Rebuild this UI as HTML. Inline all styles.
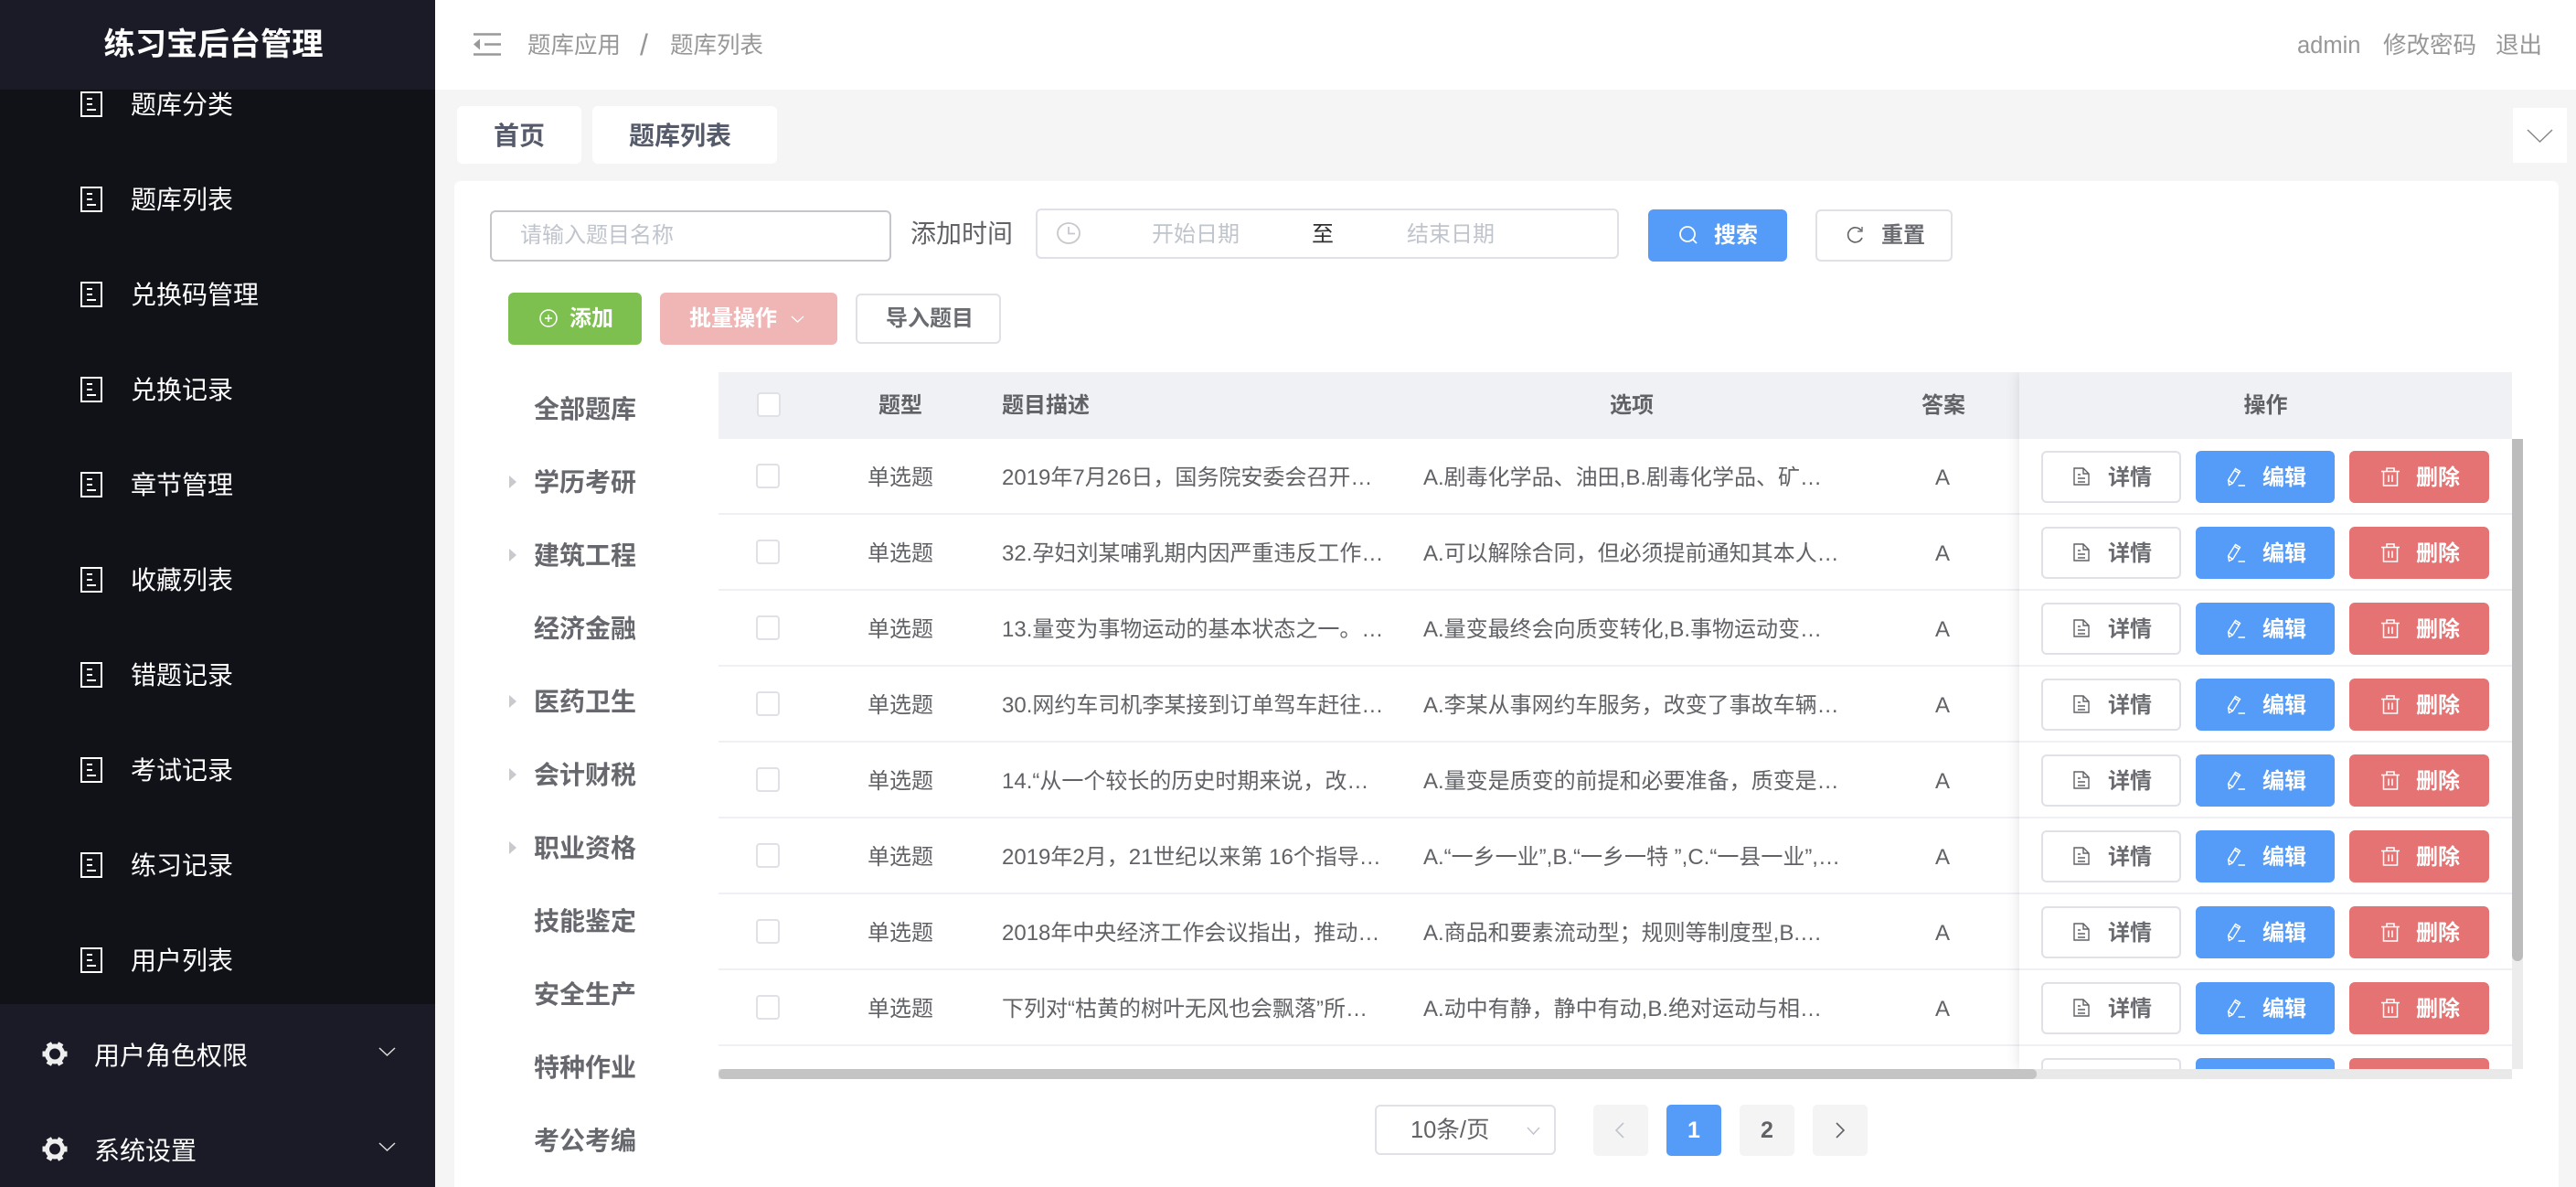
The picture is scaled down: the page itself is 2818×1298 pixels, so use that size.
<!DOCTYPE html>
<html lang="zh-CN">
<head>
<meta charset="utf-8">
<title>练习宝后台管理</title>
<style>
*{box-sizing:border-box;margin:0;padding:0}
html,body{width:2818px;height:1298px;overflow:hidden;background:#f5f5f6}
body{position:relative;font-family:"Liberation Sans","Noto Sans CJK SC",sans-serif;color:#606266}
.a{position:absolute}
.t{position:absolute;white-space:nowrap;line-height:40px;height:40px;margin-top:2px}
svg{position:absolute;display:block;overflow:visible;fill:none}
#side{left:0;top:0;width:476px;height:1298px;background:#111218;overflow:hidden}
#side .t.m{left:143px;font-size:28px;color:#fff;margin-top:1px}
#side .ic{left:88px;width:24px;height:28px;border:2px solid #fff}
#side .ic:before,#side .ic:after{content:"";position:absolute;left:5px;width:10px;height:0;border-top:2px solid #fff}
#side .ic:before{top:5px;width:6px;box-shadow:0 6px 0 #fff}
#side .ic:after{top:17px}
#logo{left:0;top:0;width:467px;height:98px;color:#fff;font-size:34.300px;font-weight:700;text-align:center;line-height:99px}
#logoBg{left:0;top:0;width:476px;height:98px;background:#1a1b26}
#bot{left:0;top:1098px;width:476px;height:200px;background:#1a1b26}
#bot .t{left:103px;font-size:28px;color:#fff}
#head{left:476px;top:0;width:2342px;height:98px;background:#fff}
.bc{font-size:25.500px;color:#979797}
.tab{background:#fff;border-radius:6px;font-size:28px;font-weight:700;color:#565b6b;text-align:center;line-height:65px}
#card{left:497px;top:198px;width:2302px;height:1110px;background:#fff;border-radius:7px}
.btn{position:absolute;border-radius:6px;font-size:24px;font-weight:700;color:#fff}
.pl{box-shadow:inset 0 0 0 2px #dfe1e6;background:#fff;color:#6a6c71;font-weight:700}
.btn .t{top:8.500px;margin-top:0}
.row .btn .t,.fr .btn .t{margin-top:1px}
.tree{left:584px;font-size:28px;font-weight:700;color:#66686d;margin-top:1px}
.tri{left:557px;width:0;height:0;border-left:8px solid #c8cacf;border-top:7px solid transparent;border-bottom:7px solid transparent}
#tbl{left:786px;top:407px;width:1962px;height:762px;overflow:hidden;background:#fff}
#thead{left:0;top:0;width:1962px;height:73px;background:#eff1f4}
#thead .t{font-size:24px;font-weight:700;color:#606266;top:15px}
.row{position:absolute;left:0;width:1962px;height:83px;border-bottom:2px solid #eef0f3;font-size:24px;color:#606266}
.row .t{top:21px}
.cb{position:absolute;width:26px;height:27px;background:#fff;border:2px solid #dfe1e6;border-radius:4px}
.c{text-align:center}
#fix{left:1423px;top:0;width:539px;height:762px;background:#fff;box-shadow:0 0 14px rgba(0,0,0,.12)}
.fr{position:absolute;left:0;width:539px;height:83px;border-bottom:2px solid #eef0f3}
.d{left:24px;top:13px;width:153px;height:57px}
.e{left:193px;top:13px;width:152px;height:57px;background:#549cf8}
.x{left:361px;top:13px;width:153px;height:57px;background:#e57373}
.pg{position:absolute;top:1208px;height:56px;width:60px;background:#f4f4f5;border-radius:5px;text-align:center;line-height:56px;font-size:25px;font-weight:700;color:#606266}
</style>
</head>
<body>
<svg width="0" height="0" style="position:absolute">
<defs>
<symbol id="doc" viewBox="0 0 18 20"><path d="M1 1h10l6 6v12H1zM11 1v6h6M5 8h3M5 12h8M5 16h8" fill="none" stroke="currentColor" stroke-width="1.400"/></symbol>
<symbol id="edit" viewBox="0 0 20 21"><path d="M2.500 19.500 1.500 14 9.500 1.500 14.500 4.500 6.500 17.500zM8.500 3.500l5 3M1.500 14l5 3.500M12.500 20h7.500" fill="none" stroke="currentColor" stroke-width="1.400"/></symbol>
<symbol id="del" viewBox="0 0 20 21"><path d="M0 4.500h20M6 4.500V1h8v3.500M2.500 4.500V20h15V4.500M8 8.500v7.500M12 8.500v7.500" fill="none" stroke="currentColor" stroke-width="1.500"/></symbol>
<symbol id="gear" viewBox="0 0 28 27"><circle cx="14" cy="13.500" r="8.500" fill="none" stroke="#eee" stroke-width="5"/><path d="M22 13.500h5.500M6 13.500H.5M18 6.570 20.750 1.800M10 6.570 7.250 1.800M18 20.430 20.750 25.200M10 20.430 7.250 25.200" fill="none" stroke="#eee" stroke-width="6"/></symbol>
</defs>
</svg>

<div class="a" id="side">
  <i class="a ic" style="top:100px"></i><div class="t m" style="top:94px">题库分类</div>
  <i class="a ic" style="top:204px"></i><div class="t m" style="top:198px">题库列表</div>
  <i class="a ic" style="top:308px"></i><div class="t m" style="top:302px">兑换码管理</div>
  <i class="a ic" style="top:412px"></i><div class="t m" style="top:406px">兑换记录</div>
  <i class="a ic" style="top:516px"></i><div class="t m" style="top:510px">章节管理</div>
  <i class="a ic" style="top:620px"></i><div class="t m" style="top:614px">收藏列表</div>
  <i class="a ic" style="top:724px"></i><div class="t m" style="top:718px">错题记录</div>
  <i class="a ic" style="top:828px"></i><div class="t m" style="top:822px">考试记录</div>
  <i class="a ic" style="top:932px"></i><div class="t m" style="top:926px">练习记录</div>
  <i class="a ic" style="top:1036px"></i><div class="t m" style="top:1030px">用户列表</div>
  <div class="a" id="logoBg"></div>
  <div class="a" id="logo">练习宝后台管理</div>
  <div class="a" id="bot">
    <svg style="left:46px;top:41px;width:28px;height:27px"><use href="#gear"/></svg>
    <div class="t" style="top:35px">用户角色权限</div>
    <svg style="left:414px;top:47px" width="19" height="10" viewBox="0 0 19 10"><path d="M1 1l8.500 8L18 1" stroke="#ddd" stroke-width="1.500"/></svg>
    <svg style="left:46px;top:145px;width:28px;height:27px"><use href="#gear"/></svg>
    <div class="t" style="top:139px">系统设置</div>
    <svg style="left:414px;top:151px" width="19" height="10" viewBox="0 0 19 10"><path d="M1 1l8.500 8L18 1" stroke="#ddd" stroke-width="1.500"/></svg>
  </div>
</div>

<div class="a" id="head">
  <svg style="left:42px;top:36px" width="30" height="26" viewBox="0 0 30 26"><path d="M0 1.500h30M12 12.500h18M0 23.500h30" stroke="#999" stroke-width="2.500"/><path d="M0 12.500l7-6v12z" fill="#999"/></svg>
  <div class="t bc" style="left:101px;top:28px">题库应用</div>
  <div class="t" style="left:224px;top:27px;font-size:32px;color:#979797">/</div>
  <div class="t bc" style="left:257px;top:28px">题库列表</div>
  <div class="t bc" style="left:2037px;top:28px">admin</div>
  <div class="t bc" style="left:2131px;top:28px">修改密码</div>
  <div class="t bc" style="left:2254px;top:28px">退出</div>
</div>

<div class="a tab" style="left:500px;top:116px;width:136px;height:63px">首页</div>
<div class="a tab" style="left:648px;top:116px;width:202px;height:63px;padding-right:10px">题库列表</div>
<div class="a" style="left:2749px;top:118px;width:59px;height:60px;background:#fff"></div>
<svg style="left:2764px;top:141px" width="29" height="15" viewBox="0 0 29 15"><path d="M1 1l13.500 13L28 1" stroke="#888" stroke-width="1.500"/></svg>

<div class="a" id="card"></div>

<div class="a" style="left:536px;top:230px;width:439px;height:56px;border:2px solid #c4c6cb;border-radius:6px;background:#fff"></div>
<div class="t" style="left:569px;top:236px;font-size:24px;color:#c0c4cc">请输入题目名称</div>
<div class="t" style="left:996px;top:234px;font-size:28px;color:#606266">添加时间</div>
<div class="a" style="left:1133px;top:228px;width:638px;height:55px;border:2px solid #dfe1e6;border-radius:6px;background:#fff"></div>
<svg style="left:1156px;top:243px" width="26" height="24" viewBox="0 0 26 24"><ellipse cx="13" cy="12" rx="12" ry="11" stroke="#c6c8cd" stroke-width="1.800"/><path d="M13 5v7.500h7" stroke="#c6c8cd" stroke-width="1.800"/></svg>
<div class="t" style="left:1260px;top:235px;font-size:24px;color:#c0c4cc">开始日期</div>
<div class="t" style="left:1435px;top:235px;font-size:24px;color:#303133">至</div>
<div class="t" style="left:1539px;top:235px;font-size:24px;color:#c0c4cc">结束日期</div>

<div class="btn" style="left:1803px;top:229px;width:152px;height:57px;background:#549cf8">
  <svg style="left:33px;top:18px" width="22" height="20" viewBox="0 0 22 20"><circle cx="10" cy="9" r="8" stroke="#fff" stroke-width="1.800"/><path d="M16 15l4 4" stroke="#fff" stroke-width="1.800"/></svg>
  <div class="t" style="left:72px">搜索</div>
</div>
<div class="btn pl" style="left:1986px;top:229px;width:150px;height:57px">
  <svg style="left:34px;top:19px" width="19" height="18" viewBox="0 0 19 18"><path d="M16 4A8 8 0 1 0 17 12" stroke="#606266" stroke-width="1.600"/><path d="M17 0v5h-5" stroke="#606266" stroke-width="1.300"/></svg>
  <div class="t" style="left:72px">重置</div>
</div>

<div class="btn" style="left:556px;top:320px;width:146px;height:57px;background:#7ec050">
  <svg style="left:34px;top:18px" width="20" height="20" viewBox="0 0 20 20"><circle cx="10" cy="10" r="9" stroke="#fff" stroke-width="1.500"/><path d="M10 6v8M6 10h8" stroke="#fff" stroke-width="1.400"/></svg>
  <div class="t" style="left:67px">添加</div>
</div>
<div class="btn" style="left:722px;top:320px;width:194px;height:57px;background:#f0b6b6">
  <div class="t" style="left:32px">批量操作</div>
  <svg style="left:143px;top:25px" width="15" height="8" viewBox="0 0 15 8"><path d="M1 1l6.500 6L14 1" stroke="#fff" stroke-width="1.300"/></svg>
</div>
<div class="btn pl" style="left:936px;top:321px;width:159px;height:55px">
  <div class="t" style="left:33px;top:7.500px">导入题目</div>
</div>

<i class="a tri" style="top:520px"></i>
<i class="a tri" style="top:600px"></i>
<i class="a tri" style="top:760px"></i>
<i class="a tri" style="top:840px"></i>
<i class="a tri" style="top:920px"></i>
<div class="t tree" style="top:427px">全部题库</div>
<div class="t tree" style="top:507px">学历考研</div>
<div class="t tree" style="top:587px">建筑工程</div>
<div class="t tree" style="top:667px">经济金融</div>
<div class="t tree" style="top:747px">医药卫生</div>
<div class="t tree" style="top:827px">会计财税</div>
<div class="t tree" style="top:907px">职业资格</div>
<div class="t tree" style="top:987px">技能鉴定</div>
<div class="t tree" style="top:1067px">安全生产</div>
<div class="t tree" style="top:1147px">特种作业</div>
<div class="t tree" style="top:1227px">考公考编</div>

<div class="a" id="tbl">
  <div class="a" id="thead">
    <i class="cb" style="left:42px;top:22px"></i>
    <div class="t c" style="left:99px;width:200px">题型</div>
    <div class="t" style="left:310px">题目描述</div>
    <div class="t c" style="left:899px;width:200px">选项</div>
    <div class="t c" style="left:1240px;width:200px">答案</div>
  </div>
  <div class="row" style="top:73px"><i class="cb" style="left:41px;top:27px"></i><div class="t c" style="left:99px;width:200px">单选题</div><div class="t" style="left:310px">2019年7月26日，国务院安委会召开…</div><div class="t" style="left:771px">A.剧毒化学品、油田,B.剧毒化学品、矿…</div><div class="t c" style="left:1239px;width:200px">A</div></div>
  <div class="row" style="top:156px"><i class="cb" style="left:41px;top:27px"></i><div class="t c" style="left:99px;width:200px">单选题</div><div class="t" style="left:310px">32.孕妇刘某哺乳期内因严重违反工作…</div><div class="t" style="left:771px">A.可以解除合同，但必须提前通知其本人…</div><div class="t c" style="left:1239px;width:200px">A</div></div>
  <div class="row" style="top:239px"><i class="cb" style="left:41px;top:27px"></i><div class="t c" style="left:99px;width:200px">单选题</div><div class="t" style="left:310px">13.量变为事物运动的基本状态之一。…</div><div class="t" style="left:771px">A.量变最终会向质变转化,B.事物运动变…</div><div class="t c" style="left:1239px;width:200px">A</div></div>
  <div class="row" style="top:322px"><i class="cb" style="left:41px;top:27px"></i><div class="t c" style="left:99px;width:200px">单选题</div><div class="t" style="left:310px">30.网约车司机李某接到订单驾车赶往…</div><div class="t" style="left:771px">A.李某从事网约车服务，改变了事故车辆…</div><div class="t c" style="left:1239px;width:200px">A</div></div>
  <div class="row" style="top:405px"><i class="cb" style="left:41px;top:27px"></i><div class="t c" style="left:99px;width:200px">单选题</div><div class="t" style="left:310px">14.“从一个较长的历史时期来说，改…</div><div class="t" style="left:771px">A.量变是质变的前提和必要准备，质变是…</div><div class="t c" style="left:1239px;width:200px">A</div></div>
  <div class="row" style="top:488px"><i class="cb" style="left:41px;top:27px"></i><div class="t c" style="left:99px;width:200px">单选题</div><div class="t" style="left:310px">2019年2月，21世纪以来第 16个指导…</div><div class="t" style="left:771px">A.“一乡一业”,B.“一乡一特 ”,C.“一县一业”,…</div><div class="t c" style="left:1239px;width:200px">A</div></div>
  <div class="row" style="top:571px"><i class="cb" style="left:41px;top:27px"></i><div class="t c" style="left:99px;width:200px">单选题</div><div class="t" style="left:310px">2018年中央经济工作会议指出，推动…</div><div class="t" style="left:771px">A.商品和要素流动型；规则等制度型,B.…</div><div class="t c" style="left:1239px;width:200px">A</div></div>
  <div class="row" style="top:654px"><i class="cb" style="left:41px;top:27px"></i><div class="t c" style="left:99px;width:200px">单选题</div><div class="t" style="left:310px">下列对“枯黄的树叶无风也会飘落”所…</div><div class="t" style="left:771px">A.动中有静，静中有动,B.绝对运动与相…</div><div class="t c" style="left:1239px;width:200px">A</div></div>
  <div class="a" id="fix">
    <div class="a" style="left:0;top:0;width:539px;height:73px;background:#eff1f4"></div>
    <div class="t c" style="left:0;top:15px;width:539px;font-size:24px;font-weight:700;color:#606266">操作</div>
    <div class="fr" style="top:73px"><div class="btn pl d"><svg style="left:35px;top:18px;color:#606266" width="18" height="20"><use href="#doc"/></svg><div class="t" style="left:73px">详情</div></div><div class="btn e"><svg style="left:34px;top:18px;color:#fff" width="20" height="21"><use href="#edit"/></svg><div class="t" style="left:73px">编辑</div></div><div class="btn x"><svg style="left:35px;top:18px;color:#fff" width="20" height="21"><use href="#del"/></svg><div class="t" style="left:73px">删除</div></div></div>
    <div class="fr" style="top:156px"><div class="btn pl d"><svg style="left:35px;top:18px;color:#606266" width="18" height="20"><use href="#doc"/></svg><div class="t" style="left:73px">详情</div></div><div class="btn e"><svg style="left:34px;top:18px;color:#fff" width="20" height="21"><use href="#edit"/></svg><div class="t" style="left:73px">编辑</div></div><div class="btn x"><svg style="left:35px;top:18px;color:#fff" width="20" height="21"><use href="#del"/></svg><div class="t" style="left:73px">删除</div></div></div>
    <div class="fr" style="top:239px"><div class="btn pl d"><svg style="left:35px;top:18px;color:#606266" width="18" height="20"><use href="#doc"/></svg><div class="t" style="left:73px">详情</div></div><div class="btn e"><svg style="left:34px;top:18px;color:#fff" width="20" height="21"><use href="#edit"/></svg><div class="t" style="left:73px">编辑</div></div><div class="btn x"><svg style="left:35px;top:18px;color:#fff" width="20" height="21"><use href="#del"/></svg><div class="t" style="left:73px">删除</div></div></div>
    <div class="fr" style="top:322px"><div class="btn pl d"><svg style="left:35px;top:18px;color:#606266" width="18" height="20"><use href="#doc"/></svg><div class="t" style="left:73px">详情</div></div><div class="btn e"><svg style="left:34px;top:18px;color:#fff" width="20" height="21"><use href="#edit"/></svg><div class="t" style="left:73px">编辑</div></div><div class="btn x"><svg style="left:35px;top:18px;color:#fff" width="20" height="21"><use href="#del"/></svg><div class="t" style="left:73px">删除</div></div></div>
    <div class="fr" style="top:405px"><div class="btn pl d"><svg style="left:35px;top:18px;color:#606266" width="18" height="20"><use href="#doc"/></svg><div class="t" style="left:73px">详情</div></div><div class="btn e"><svg style="left:34px;top:18px;color:#fff" width="20" height="21"><use href="#edit"/></svg><div class="t" style="left:73px">编辑</div></div><div class="btn x"><svg style="left:35px;top:18px;color:#fff" width="20" height="21"><use href="#del"/></svg><div class="t" style="left:73px">删除</div></div></div>
    <div class="fr" style="top:488px"><div class="btn pl d"><svg style="left:35px;top:18px;color:#606266" width="18" height="20"><use href="#doc"/></svg><div class="t" style="left:73px">详情</div></div><div class="btn e"><svg style="left:34px;top:18px;color:#fff" width="20" height="21"><use href="#edit"/></svg><div class="t" style="left:73px">编辑</div></div><div class="btn x"><svg style="left:35px;top:18px;color:#fff" width="20" height="21"><use href="#del"/></svg><div class="t" style="left:73px">删除</div></div></div>
    <div class="fr" style="top:571px"><div class="btn pl d"><svg style="left:35px;top:18px;color:#606266" width="18" height="20"><use href="#doc"/></svg><div class="t" style="left:73px">详情</div></div><div class="btn e"><svg style="left:34px;top:18px;color:#fff" width="20" height="21"><use href="#edit"/></svg><div class="t" style="left:73px">编辑</div></div><div class="btn x"><svg style="left:35px;top:18px;color:#fff" width="20" height="21"><use href="#del"/></svg><div class="t" style="left:73px">删除</div></div></div>
    <div class="fr" style="top:654px"><div class="btn pl d"><svg style="left:35px;top:18px;color:#606266" width="18" height="20"><use href="#doc"/></svg><div class="t" style="left:73px">详情</div></div><div class="btn e"><svg style="left:34px;top:18px;color:#fff" width="20" height="21"><use href="#edit"/></svg><div class="t" style="left:73px">编辑</div></div><div class="btn x"><svg style="left:35px;top:18px;color:#fff" width="20" height="21"><use href="#del"/></svg><div class="t" style="left:73px">删除</div></div></div>
    <div class="fr" style="top:737px"><div class="btn pl d"></div><div class="btn e"></div><div class="btn x"></div></div>
  </div>
</div>

<div class="a" style="left:2748px;top:480px;width:12px;height:689px;background:#ececec"></div>
<div class="a" style="left:2748px;top:480px;width:12px;height:571px;background:#bcbcbc;border-radius:0 0 6px 6px"></div>
<div class="a" style="left:786px;top:1169px;width:1962px;height:11px;background:#e9e9e9"></div>
<div class="a" style="left:786px;top:1169px;width:1442px;height:11px;background:#c4c4c4;border-radius:5px"></div>

<div class="a" style="left:1504px;top:1208px;width:198px;height:55px;border:2px solid #dfe1e6;border-radius:6px;background:#fff"></div>
<div class="t" style="left:1543px;top:1214px;font-size:25.500px;color:#606266">10条/页</div>
<svg style="left:1670px;top:1232px" width="15" height="9" viewBox="0 0 15 9"><path d="M1 1l6.500 7L14 1" stroke="#c0c4cc" stroke-width="1.500"/></svg>
<div class="pg" style="left:1743px"></div>
<svg style="left:1767px;top:1227px" width="10" height="18" viewBox="0 0 10 18"><path d="M9 1L1 9l8 8" stroke="#c0c4cc" stroke-width="1.600"/></svg>
<div class="pg" style="left:1823px;background:#549cf8;color:#fff">1</div>
<div class="pg" style="left:1903px">2</div>
<div class="pg" style="left:1983px"></div>
<svg style="left:2008px;top:1227px" width="10" height="18" viewBox="0 0 10 18"><path d="M1 1l8 8-8 8" stroke="#606266" stroke-width="1.600"/></svg>
</body>
</html>
